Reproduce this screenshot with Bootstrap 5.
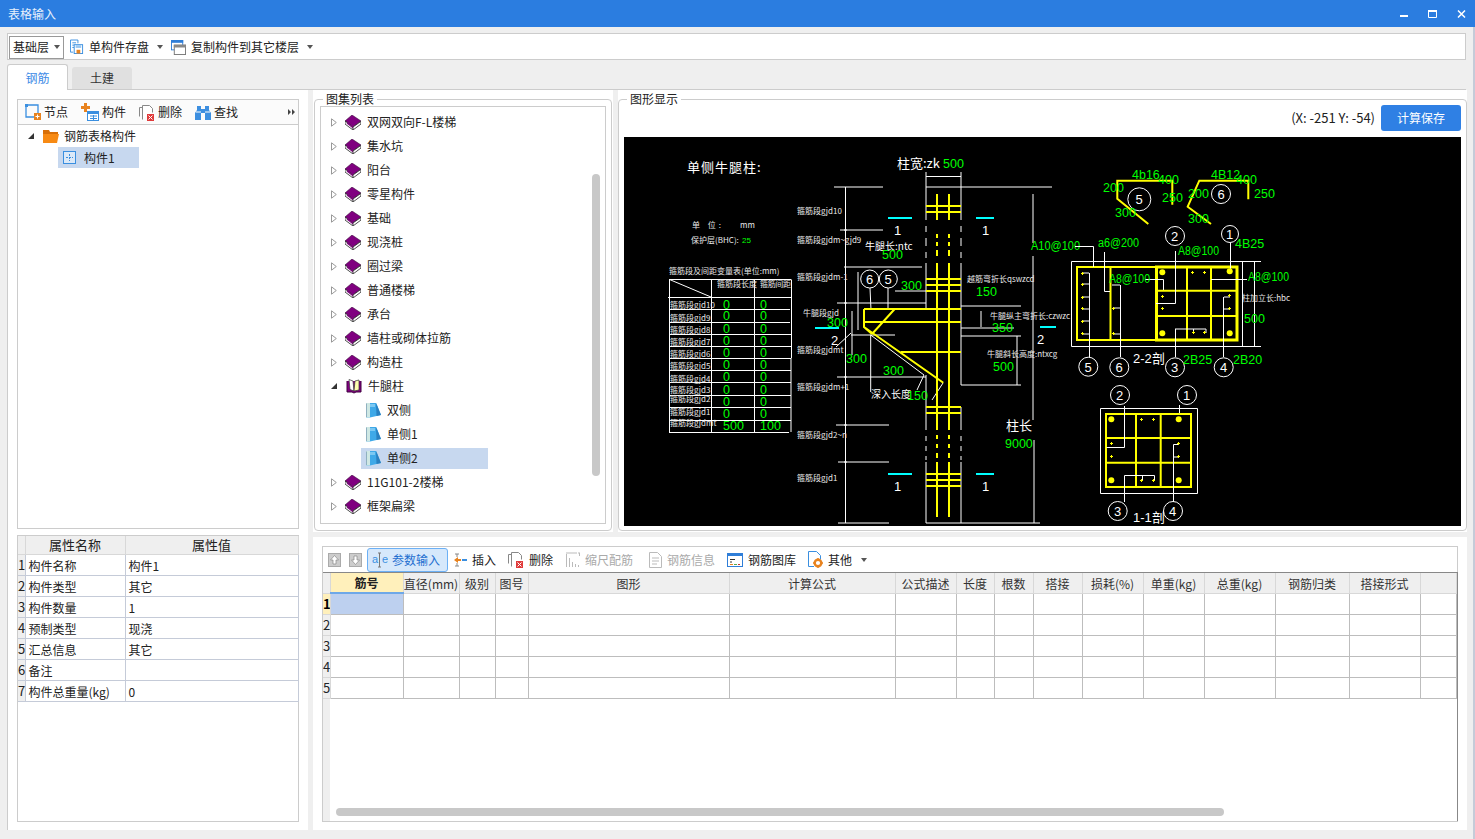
<!DOCTYPE html>
<html lang="zh-CN">
<head>
<meta charset="UTF-8">
<title>表格输入</title>
<link href="https://cdn.jsdelivr.net/npm/bootstrap@5.3.0/dist/css/bootstrap.min.css" rel="stylesheet">
<style>
html, body { height: 839px; overflow: hidden; }
body { font: 12px/16px "Noto Sans CJK SC", "Noto Sans", sans-serif; color: #222; background: #efefef; }
svg { display: block; flex: none; }
.title-bar { height: 27px; background: #2b7de0; color: #e8f1fc; padding-left: 8px; }
.win-ctl { gap: 20px; padding-right: 9px; }
.win-body { height: 812px; padding: 6px 7px 0; border-right: 2px solid #c5cbd8; }
.top-tools { height: 27px; background: #fff; border: 1px solid #ccc; padding: 1px 0 0 1px; }
.floor-select { width: 55px; height: 23px; border: 1px solid #999; padding-left: 3px; gap: 5px; color: #222; white-space: nowrap; }
.tri-down { width: 0; height: 0; border: 3px solid transparent; border-top: 4px solid #555; border-bottom: 0; flex: none; }
.tool-item { gap: 5px; white-space: nowrap; margin-left: 6px; }
.tool-item + .tool-item { margin-left: 8px; }
.tool-item .tri-down { margin-left: 3px; }
.page-tabs { height: 26px; margin-top: 4px; border-bottom: 1px solid #ccc; gap: 4px; }
.page-tabs .nav-link { font-size: 12px; padding: 0; text-align: center; width: 60px; color: #333; background: #e0e0e0; border: 0; border-radius: 3px 3px 0 0; height: 22px; line-height: 22px; margin-top: 3px; }
.page-tabs .nav-link.active { height: 26px; margin: 0; line-height: 26px; width: 61px; color: #3d8ae6; background: #fff; border: 1px solid #ccc; border-bottom: 0; }
.tab-panes { height: 740px; }
.pane-left { width: 301px; background: #fff; border-left: 1px solid #ccc; padding: 9px 9px 8px 9px; }
.tool-row { height: 26px; border: 1px solid #ccc; background: #fbfbfb; flex: none; }
.left-tool { gap: 3px; margin-left: 7px; margin-right: 6px; }
.more-arrows { margin-left: auto; margin-right: 3px; }
.tree-box { height: 404px; border: 1px solid #ccc; border-top: 0; flex: none; }
.sel-wrap { height: 21px; padding-left: 5px; gap: 0; }
.sel-wrap svg { margin-right: 6px; }
.left-root { padding-left: 10px; height: 21px; }
.left-root .tri-open { margin-right: 9px; }
.left-root svg + span { margin-left: 5px; }
.left-child { margin-left: 40px; margin-top: 1px; width: 81px; height: 21px; padding-left: 5px; gap: 7px; background: #c7d8ef; }
.tri-open { width: 0; height: 0; border-left: 6px solid transparent; border-bottom: 6px solid #333; flex: none; }
.prop-box { height: 287px; border: 1px solid #ccc; margin-top: 6px; flex: none; }
.prop-table { margin: 0; width: 280px; table-layout: fixed; border-color: #c5cbd8; }
.prop-table th, .prop-table td { padding: 1px 3px 0; height: 21px; line-height: 19px; border: 1px solid #c5cbd8; border-width: 0 1px 1px 0; color: #222; vertical-align: middle; }
.prop-table th { height: 18px; padding: 0; line-height: 17px; background: #efefef; font-size: 13px; font-weight: 400; text-align: center; border-color: #d8d8d8; }
.prop-table td.row-no, .grid-table td.row-no { background: #efefef; padding: 0; text-align: center; font-size: 13px; vertical-align: middle; }
.p-no { width: 7px; } .p-name { width: 100px; } .p-val { width: 173px; }
.gutter-col { width: 5px; flex: none; }
.pane-mid { width: 300px; height: 442px; background: #fff; padding: 9px 1px 1px; }
.pane-right { width: 849px; height: 442px; background: #fff; padding: 9px 0 1px; }
.group-box { position: relative; height: 100%; border: 1px solid #ccc; border-radius: 4px; padding: 6px 5px; }
.pane-right .group-box { padding-top: 5px; }
.group-title { position: absolute; top: -9px; left: 8px; background: #fff; padding: 0 3px; }
.atlas-box { height: 418px; border: 1px solid #ccc; overflow: hidden; position: relative; padding-top: 3px; }
.atlas-row { height: 24px; padding-left: 10px; white-space: nowrap; }
.tri-closed { margin-right: 8px; }
.atlas-row .tri-open { margin-right: 9px; margin-left: 0; }
.atlas-row > svg + span { margin-left: 6px; }
.atlas-child { padding-left: 40px; }
.atlas-child .sel-wrap { width: 127px; }
.atlas-child.is-sel .sel-wrap { background: #c7d8ef; }
.v-scroll { position: absolute; top: 67px; left: 271px; width: 8px; height: 302px; background: #c8c8c8; border-radius: 4px; }
.coord-row { height: 32px; padding-bottom: 6px; gap: 6px; font-size: 13px; }
.calc-btn { width: 80px; height: 26px; padding: 0; font-size: 12px; background: #2f80e4; border: 0; border-radius: 3px; color: #fff; }
.cad-view { background: #000; }
.cad-view .ln { fill: none; stroke: #fff; stroke-width: 1; }
.cad-view .yl { fill: none; stroke: #ff0; stroke-width: 2; }
.cad-view .yt { fill: none; stroke: #ff0; stroke-width: 3; }
.cad-view .yp { fill: none; stroke: #ff0; stroke-width: 1; }
.cad-view .cy { fill: none; stroke: #0ff; stroke-width: 2; }
.cad-view .gn { fill: #0f0; font: 12.5px "Liberation Sans", sans-serif; }
.cad-view .gn-s { fill: #0f0; font: 8px "Liberation Sans", sans-serif; }
.cad-view .wt { fill: #fff; font: 13px "Noto Sans CJK SC", sans-serif; }
.cad-view .wm { fill: #fff; font: 10px "Noto Sans CJK SC", sans-serif; }
.cad-view .wl { fill: #fff; font: 13px "Liberation Sans", sans-serif; }
.cad-view .sm { fill: #e8e8e8; font: 8px "Noto Sans CJK SC", sans-serif; }
.cad-view .bd { fill: #ff0; }
.pane-bottom { height: 293px; margin-top: 5px; background: #fff; padding: 9px 9px 8px; width: 1154px; }
.grid-box { height: 100%; border: 1px solid #ccc; border-right: 0; }
.grid-tools { height: 25px; padding-left: 5px; flex: none; border-right: 1px solid #ccc; }
.grid-tool { gap: 5px; white-space: nowrap; height: 24px; }
.tool-on { width: 81px; height: 24px; margin: 0 5px 0 5px; padding: 0 0 0 4px; gap: 4px; background: #d6e8fb; border: 1px solid #6cb0f5; border-radius: 3px; color: #1f6fd0; font-size: 12px; }
.ae-mark { font: 11px "Liberation Sans", sans-serif; fill: #3a8fe0; }
.tool-off { color: #aaa; }
.grid-area { position: relative; overflow: hidden; background: linear-gradient(90deg, #efefef 7px, #fff 7px); border-top: 1px solid #888; border-right: 1px solid #888; }
.grid-table { margin: 0; width: 1133px; table-layout: fixed; }
.grid-table th, .grid-table td { height: 21px; padding: 0; border: 1px solid #bdbdbd; border-width: 0 1px 1px 0; }
.grid-table th { height: 20px; background: #efefef; font-weight: 400; text-align: center; line-height: 19px; border-color: #d8d8d8; color: #333; white-space: nowrap; overflow: hidden; }
.grid-table th.hd-on { background: #fff0bb; font-weight: 700; border-bottom: 2px solid #6ea8e8; color: #222; }
.grid-table td.row-on { background: #fff0bb; font-weight: 700; color: #000; }
.grid-table td.cell-on { background: #bdd0ef; }
.grid-table td.row-no { border-color: #d8d8d8; overflow: hidden; }
.h-scroll { position: absolute; left: 13px; right: 233px; bottom: 5px; height: 8px; background: #c8c8c8; border-radius: 4px; }
.g0 { width: 7px; } .g1 { width: 73px; } .g2 { width: 56px; } .g3 { width: 36px; } .g4 { width: 33px; } .g5 { width: 201px; } .g6 { width: 166px; }
.g7 { width: 61px; } .g8 { width: 38px; } .g9 { width: 39px; } .g10 { width: 49px; } .g11 { width: 61px; } .g12 { width: 61px; } .g13 { width: 71px; } .g14 { width: 74px; } .g15 { width: 71px; } .g16 { width: 36px; }
</style>
</head>
<body>
<svg width="0" height="0" class="position-absolute">
  <symbol id="i-book" viewBox="0 0 16 15"><path d="M0 6 7 0l9 6-8 6z" fill="#800080" stroke="#3a0a3a" stroke-width=".6"/><path d="M0 6v3l8 6 8-6-.2-2.500L8 12z" fill="#fff" stroke="#222" stroke-width=".8"/><path d="M2 8l6 4.800" stroke="#800080" stroke-width="1.200"/><path d="M8 12.500v2" stroke="#222"/></symbol>
  <symbol id="i-open" viewBox="0 0 16 16"><path d="M1 3v11h5l2 1 2-1h5V3" fill="#800080" stroke="#400040"/><path d="M3 1.500l4 1.500 1 10-4-1.500z" fill="#fff" stroke="#333" stroke-width=".7"/><path d="M13 2 9 3 8 13l5-1z" fill="#ffffb0" stroke="#333" stroke-width=".7"/></symbol>
  <symbol id="i-note" viewBox="0 0 15 16"><path d="M0 1h10l1.500 3L15 13l-11 2.500H0z" fill="#3fa9e8"/><path d="M0 1h4v14.500H0z" fill="#cfe8e4"/><path d="M.5 1.500v13.500" stroke="#8fb0c0"/><path d="M10 1l5 12-4.500 1z" fill="#2a80c0"/><path d="M4 2h5v3H4z" fill="#7cc8f2"/></symbol>
  <symbol id="i-save" viewBox="0 0 15 16"><path d="M8.500 4V.5h-8v13h3" fill="none" stroke="#3a8fe0"/><path d="M2.500 3.500h4M2.500 6h2M2.500 8.500h2" stroke="#3a8fe0"/><rect x="4.500" y="5.500" width="9" height="9.500" fill="#fff" stroke="#3a8fe0"/><rect x="6" y="6" width="6" height="3" fill="#9cc8f0"/><rect x="7" y="11" width="4" height="4" fill="#e8831f"/></symbol>
  <symbol id="i-win" viewBox="0 0 16 16"><rect x=".5" y=".5" width="12" height="10" fill="#fff" stroke="#2f7ed8"/><rect width="13" height="3" fill="#2f7ed8"/><rect x="3.500" y="5.500" width="12" height="10" fill="#fff" stroke="#777"/><rect x="3" y="5" width="13" height="3" fill="#888"/></symbol>
  <symbol id="i-node" viewBox="0 0 16 16"><path d="M1 1h12v8M9 13H1V1" fill="none" stroke="#3a8fe0" stroke-width="1.300"/><rect width="3" height="3" fill="#3a8fe0"/><rect x="9" y="9" width="7" height="7" fill="#e8831f"/><path d="M12.500 10.500v4M10.500 12.500h4" stroke="#fff"/></symbol>
  <symbol id="i-comp" viewBox="0 0 18 18"><path d="M3 0h3v3h3v3H6v3H3V6H0V3h3z" fill="#e8831f"/><rect x="6.500" y="8.500" width="11" height="9" fill="#fff" stroke="#3a8fe0"/><rect x="6" y="8" width="12" height="3" fill="#3a8fe0"/><path d="M9 13h7M9 15.500h7M12.500 12v5" stroke="#3a8fe0"/></symbol>
  <symbol id="i-del" viewBox="0 0 16 17"><path d="M3.500 15.500V1.500h7l3 3v4" fill="#fff" stroke="#888"/><path d="M.5 12.500V3.500H3" fill="none" stroke="#888"/><rect x="8" y="10" width="7" height="7" fill="#e03a3a"/><path d="M9.500 11.500l4 4m0-4-4 4" stroke="#fff"/></symbol>
  <symbol id="i-find" viewBox="0 0 16 15"><path d="M2 1h4v3h4V1h4v4l2 3v7H10V8H6v7H0V8l2-3z" fill="#3d8fe0"/><path d="M1 7h5M10 7h5" stroke="#fff"/></symbol>
  <symbol id="i-folder" viewBox="0 0 16 14"><path d="M0 1h6l1 2h8v3H0z" fill="#d86f08"/><path d="M0 5h16l-2 9H0z" fill="#f78a14"/></symbol>
  <symbol id="i-item" viewBox="0 0 14 14"><rect x=".5" y=".5" width="12" height="12" fill="#dbe9f8" stroke="#3a8fe0"/><path d="M6.500 3v7M3 6.500h7" stroke="#3a8fe0" stroke-dasharray="2 1"/></symbol>
  <symbol id="i-up" viewBox="0 0 13 14"><rect x=".5" y=".5" width="12" height="13" fill="#ccc" stroke="#aaa"/><path d="M6.500 2.500 2.500 7H5v4h3V7h2.500z" fill="#fff" stroke="#888" stroke-width=".7"/></symbol>
  <symbol id="i-down" viewBox="0 0 13 14"><rect x=".5" y=".5" width="12" height="13" fill="#ccc" stroke="#aaa"/><path d="M6.500 11.500 2.500 7H5V3h3v4h2.500z" fill="#fff" stroke="#888" stroke-width=".7"/></symbol>
  <symbol id="i-ins" viewBox="0 0 14 16"><path d="M2 2h4M2 14h4M4 2v3M4 11v3" stroke="#888"/><path d="M1 8l4-3v2h3v2H5v2z" fill="#e8831f"/><rect x="9" y="7" width="5" height="2" fill="#3a8fe0"/></symbol>
  <symbol id="i-scale" viewBox="0 0 15 15"><path d="M1.500 15V2M4.500 15V6M7.500 15V10M10.500 15v-3M13.500 15v-2" stroke="#bbb"/><path d="M1 1h11M13 1h2M14.500 1v3" stroke="#bbb"/></symbol>
  <symbol id="i-info" viewBox="0 0 13 16"><path d="M.5.5h8l4 4v11H.5z" fill="#fff" stroke="#bbb"/><path d="M3 6h7M3 9h7M3 12h5" stroke="#bbb"/></symbol>
  <symbol id="i-lib" viewBox="0 0 16 14"><rect x=".5" y=".5" width="15" height="13" fill="#fff" stroke="#2f7ed8"/><rect width="16" height="3" fill="#2f7ed8"/><path d="M3 6.500h5M3 9h2" stroke="#333"/><path d="M3 11.500h3" stroke="#e8831f"/><path d="M7 11.500h3" stroke="#5a5"/><path d="M11 11.500h2" stroke="#c33"/></symbol>
  <symbol id="i-other" viewBox="0 0 15 17"><path d="M6 15.500H.5V.5h8l4 4v4" fill="#fff" stroke="#3a8fe0"/><circle cx="10" cy="12" r="3.300" fill="none" stroke="#e8831f" stroke-width="2.400"/><path d="M10 7v1.500M10 15.500V17M5 12h1.500M13.500 12H15" stroke="#e8831f" stroke-width="1.500"/></symbol>
  <symbol id="i-tri" viewBox="0 0 6 9"><path d="M.5.8v7.400L5.300 4.500z" fill="#fff" stroke="#999"/></symbol>
</svg>

<header class="title-bar d-flex align-items-center justify-content-between">
  <span>表格输入</span>
  <div class="win-ctl d-flex align-items-center">
    <svg width="8" height="8" viewBox="0 0 8 8"><rect y="5" width="8" height="2" fill="#fff"/></svg>
    <svg width="9" height="8" viewBox="0 0 9 8"><path d="M.5 1.500h8v6h-8z" fill="none" stroke="#fff"/><rect width="9" height="2" fill="#fff"/></svg>
    <svg width="9" height="8" viewBox="0 0 9 8"><path d="M1 .5l7 7m0-7-7 7" stroke="#fff" stroke-width="1.500"/></svg>
  </div>
</header>

<div class="win-body">
  <div class="top-tools d-flex align-items-center">
    <div class="floor-select d-flex align-items-center"><span>基础层</span><span class="tri-down"></span></div>
    <div class="tool-item d-flex align-items-center"><svg width="14" height="16"><use href="#i-save"/></svg><span>单构件存盘</span><span class="tri-down"></span></div>
    <div class="tool-item d-flex align-items-center"><svg width="15" height="15"><use href="#i-win"/></svg><span>复制构件到其它楼层</span><span class="tri-down"></span></div>
  </div>

  <ul class="nav page-tabs">
    <li class="nav-item"><a class="nav-link active" href="#">钢筋</a></li>
    <li class="nav-item"><a class="nav-link" href="#">土建</a></li>
  </ul>

  <div class="tab-panes d-flex">
    <section class="pane-left d-flex flex-column">
      <div class="tool-row d-flex align-items-center">
        <div class="left-tool d-flex align-items-center"><svg width="16" height="16"><use href="#i-node"/></svg><span>节点</span></div>
        <div class="left-tool d-flex align-items-center"><svg width="18" height="18"><use href="#i-comp"/></svg><span>构件</span></div>
        <div class="left-tool d-flex align-items-center"><svg width="16" height="17"><use href="#i-del"/></svg><span>删除</span></div>
        <div class="left-tool d-flex align-items-center"><svg width="16" height="15"><use href="#i-find"/></svg><span>查找</span></div>
        <svg class="more-arrows" width="7" height="6" viewBox="0 0 7 6"><path d="M0 0l3 3-3 3zM4 0l3 3-3 3z" fill="#444"/></svg>
      </div>
      <div class="tree-box">
        <div class="left-root d-flex align-items-center"><span class="tri-open"></span><svg width="16" height="14"><use href="#i-folder"/></svg><span>钢筋表格构件</span></div>
        <div class="left-child d-flex align-items-center"><svg width="14" height="14"><use href="#i-item"/></svg><span>构件1</span></div>
      </div>
      <div class="prop-box">
        <table class="table prop-table">
          <colgroup><col class="p-no"><col class="p-name"><col class="p-val"></colgroup>
          <thead><tr><th></th><th>属性名称</th><th>属性值</th></tr></thead>
          <tbody>
            <tr><td class="row-no">1</td><td>构件名称</td><td>构件1</td></tr>
            <tr><td class="row-no">2</td><td>构件类型</td><td>其它</td></tr>
            <tr><td class="row-no">3</td><td>构件数量</td><td>1</td></tr>
            <tr><td class="row-no">4</td><td>预制类型</td><td>现浇</td></tr>
            <tr><td class="row-no">5</td><td>汇总信息</td><td>其它</td></tr>
            <tr><td class="row-no">6</td><td>备注</td><td></td></tr>
            <tr><td class="row-no">7</td><td>构件总重量(kg)</td><td>0</td></tr>
          </tbody>
        </table>
      </div>
    </section>
    <div class="gutter-col"></div>

    <div class="d-flex flex-column">
      <div class="d-flex">
        <section class="pane-mid">
          <div class="group-box">
            <span class="group-title">图集列表</span>
            <div class="atlas-box">
              <div class="atlas-row d-flex align-items-center"><svg class="tri-closed" width="6" height="9"><use href="#i-tri"/></svg><svg width="16" height="15"><use href="#i-book"/></svg><span>双网双向F-L楼梯</span></div>
              <div class="atlas-row d-flex align-items-center"><svg class="tri-closed" width="6" height="9"><use href="#i-tri"/></svg><svg width="16" height="15"><use href="#i-book"/></svg><span>集水坑</span></div>
              <div class="atlas-row d-flex align-items-center"><svg class="tri-closed" width="6" height="9"><use href="#i-tri"/></svg><svg width="16" height="15"><use href="#i-book"/></svg><span>阳台</span></div>
              <div class="atlas-row d-flex align-items-center"><svg class="tri-closed" width="6" height="9"><use href="#i-tri"/></svg><svg width="16" height="15"><use href="#i-book"/></svg><span>零星构件</span></div>
              <div class="atlas-row d-flex align-items-center"><svg class="tri-closed" width="6" height="9"><use href="#i-tri"/></svg><svg width="16" height="15"><use href="#i-book"/></svg><span>基础</span></div>
              <div class="atlas-row d-flex align-items-center"><svg class="tri-closed" width="6" height="9"><use href="#i-tri"/></svg><svg width="16" height="15"><use href="#i-book"/></svg><span>现浇桩</span></div>
              <div class="atlas-row d-flex align-items-center"><svg class="tri-closed" width="6" height="9"><use href="#i-tri"/></svg><svg width="16" height="15"><use href="#i-book"/></svg><span>圈过梁</span></div>
              <div class="atlas-row d-flex align-items-center"><svg class="tri-closed" width="6" height="9"><use href="#i-tri"/></svg><svg width="16" height="15"><use href="#i-book"/></svg><span>普通楼梯</span></div>
              <div class="atlas-row d-flex align-items-center"><svg class="tri-closed" width="6" height="9"><use href="#i-tri"/></svg><svg width="16" height="15"><use href="#i-book"/></svg><span>承台</span></div>
              <div class="atlas-row d-flex align-items-center"><svg class="tri-closed" width="6" height="9"><use href="#i-tri"/></svg><svg width="16" height="15"><use href="#i-book"/></svg><span>墙柱或砌体拉筋</span></div>
              <div class="atlas-row d-flex align-items-center"><svg class="tri-closed" width="6" height="9"><use href="#i-tri"/></svg><svg width="16" height="15"><use href="#i-book"/></svg><span>构造柱</span></div>
              <div class="atlas-row d-flex align-items-center"><span class="tri-open"></span><svg width="16" height="16"><use href="#i-open"/></svg><span>牛腿柱</span></div>
              <div class="atlas-row atlas-child d-flex align-items-center"><div class="sel-wrap d-flex align-items-center"><svg width="15" height="16"><use href="#i-note"/></svg><span>双侧</span></div></div>
              <div class="atlas-row atlas-child d-flex align-items-center"><div class="sel-wrap d-flex align-items-center"><svg width="15" height="16"><use href="#i-note"/></svg><span>单侧1</span></div></div>
              <div class="atlas-row atlas-child is-sel d-flex align-items-center"><div class="sel-wrap d-flex align-items-center"><svg width="15" height="16"><use href="#i-note"/></svg><span>单侧2</span></div></div>
              <div class="atlas-row d-flex align-items-center"><svg class="tri-closed" width="6" height="9"><use href="#i-tri"/></svg><svg width="16" height="15"><use href="#i-book"/></svg><span>11G101-2楼梯</span></div>
              <div class="atlas-row d-flex align-items-center"><svg class="tri-closed" width="6" height="9"><use href="#i-tri"/></svg><svg width="16" height="15"><use href="#i-book"/></svg><span>框架扁梁</span></div>
              <div class="atlas-row d-flex align-items-center"><svg class="tri-closed" width="6" height="9"><use href="#i-tri"/></svg><svg width="16" height="15"><use href="#i-book"/></svg></div>
              <div class="v-scroll"></div>
            </div>
          </div>
        </section>
        <div class="gutter-col"></div>
        <section class="pane-right">
          <div class="group-box">
            <span class="group-title">图形显示</span>
            <div class="coord-row d-flex align-items-center justify-content-end"><span>(X: -251 Y: -54)</span><button class="btn calc-btn" type="button">计算保存</button></div>
            <!-- 钢筋示意图，坐标按页面像素 -->
            <svg class="cad-view" width="837" height="389" viewBox="624 137 837 389">
              <!-- 立面白线 -->
              <path class="ln" d="M926 172V187M961 172V187M926 176.500H961M926 187H1052M926 187V220M926 226V232M926 238V246M926 252V258M926 263V309M961 187V220M961 226V232M961 238V246M961 252V258M961 263V385M926 375V430M926 436V441M926 446V451M926 456V460M926 462V523M961 407V430M961 436V441M961 446V451M961 456V460M961 462V523M926 523H1040"/>
              <path class="ln" d="M845.500 187V523M834 187H883M840 230H883M847 267H922M837 303H926M837 377H926M836 425H889M838 462H889M838 523H889M851 335H895M852 311V355M858 272V330M844 230h3M844 267h3M844 303h3M844 377h3M844 425h3M844 462h3"/>
              <path class="ln" d="M961 306H1021M961 328H1014M981 311V327M961 336H1021M961 385H1021M1017 336V385M1033 194V243M1033 256V420M1034 440V523M870 288 871 310M888 288V310M895 291H926M870.700 335 924 375M870.700 335V392M917 390 924 375M932 400 943 383M851 333 836 347"/>
              <circle class="ln" cx="869.700" cy="279" r="9"/><circle class="ln" cx="888.300" cy="279" r="9"/>
              <text class="wl" x="866" y="284">6</text><text class="wl" x="884.500" y="284">5</text>
              <!-- 立面钢筋 -->
              <path class="yl" d="M937 194V220M949 194V220M937 234V238M949 234V238M937 242V246M949 242V246M937 250V256M949 250V256M937 263V430M949 263V430M937 435V439M949 435V439M937 444V448M949 444V448M937 453V458M949 453V458M937 462V517M949 462V517"/>
              <path class="yl" d="M926 206H961M926 212H961M926 279H961M926 285H961M926 291H961M864 309H961M864 322H961M864 309V327L872 334M894.700 309 872 334M864 327 943.300 382.700M900.700 352H961M926 407H961M926 413H961M926 474H961M926 480H961M926 486H961"/>
              <path class="cy" d="M888 218H912M976 218H994M888 474H912M976 474H994M815 328H839M1040 327H1056"/>
              <!-- 变量表 -->
              <path class="ln" d="M669.500 279.500V432M711.500 279.500V432M754.500 279.500V432M791.500 279.500V358M791 358V432M669 279.500H791M669.500 279.500 711 297M668 297.500H791M669 309.500H790M669 322.500H790M669 334.500H791M669 346.500H791M669 358.500H791M669 370.500H791M669 382.500H791M669 395.500H791M669 407.500H791M669 420.500H791M669 432.500H789"/>
              <text class="sm" x="669" y="274">箍筋段及间距变量表(单位:mm)</text>
              <text class="sm" x="717" y="287">箍筋段长度</text><text class="sm" x="760" y="287" textLength="31">箍筋间距</text>
              <g>
                <text class="sm" x="670" y="308">箍筋段gjd10</text><text class="sm" x="670" y="321">箍筋段gjd9</text><text class="sm" x="670" y="333">箍筋段gjd8</text><text class="sm" x="670" y="345">箍筋段gjd7</text><text class="sm" x="670" y="357">箍筋段gjd6</text><text class="sm" x="670" y="369">箍筋段gjd5</text><text class="sm" x="670" y="382">箍筋段gjd4</text><text class="sm" x="670" y="393">箍筋段gjd3</text><text class="sm" x="670" y="402">箍筋段gjd2</text><text class="sm" x="670" y="415">箍筋段gjd1</text><text class="sm" x="670" y="426">箍筋段gjdmt</text>
              </g>
              <g>
                <text class="gn" x="723" y="309">0</text><text class="gn" x="760" y="309">0</text><text class="gn" x="723" y="320">0</text><text class="gn" x="760" y="320">0</text><text class="gn" x="723" y="333">0</text><text class="gn" x="760" y="333">0</text><text class="gn" x="723" y="345">0</text><text class="gn" x="760" y="345">0</text><text class="gn" x="723" y="357">0</text><text class="gn" x="760" y="357">0</text><text class="gn" x="723" y="369">0</text><text class="gn" x="760" y="369">0</text><text class="gn" x="723" y="381">0</text><text class="gn" x="760" y="381">0</text><text class="gn" x="723" y="394">0</text><text class="gn" x="760" y="394">0</text><text class="gn" x="723" y="406">0</text><text class="gn" x="760" y="406">0</text><text class="gn" x="723" y="418">0</text><text class="gn" x="760" y="418">0</text><text class="gn" x="723" y="430">500</text><text class="gn" x="760" y="430">100</text>
              </g>
              <!-- 文字 -->
              <text class="wt" x="687" y="172" letter-spacing="1">单侧牛腿柱:</text>
              <text class="wt" x="897" y="168">柱宽:zk</text><text class="gn" x="943" y="168">500</text>
              <text class="sm" x="692" y="228" letter-spacing="3">单 位:</text><text class="sm" x="740" y="228">mm</text>
              <text class="sm" x="691" y="243">保护层(BHC):</text><text class="gn-s" x="742" y="243">25</text>
              <text class="sm" x="797" y="214">箍筋段gjd10</text><text class="sm" x="797" y="243">箍筋段gjdm~gjd9</text><text class="sm" x="797" y="280">箍筋段gjdm-1</text><text class="sm" x="803" y="316">牛腿段gjd</text><text class="sm" x="797" y="353">箍筋段gjdmt</text><text class="sm" x="797" y="390">箍筋段gjdm+1</text><text class="sm" x="797" y="438">箍筋段gjd2~n</text><text class="sm" x="797" y="481">箍筋段gjd1</text>
              <text class="wm" x="865" y="250">牛腿长:ntc</text>
              <text class="sm" x="967" y="282">越筋弯折长qswzcd</text><text class="sm" x="990" y="319">牛腿纵主弯折长:czwzc</text><text class="sm" x="987" y="357">牛腿斜长高度:ntxcg</text>
              <text class="wm" x="871" y="398">深入长度</text><text class="wt" x="1006" y="430">柱长</text>
              <text class="wl" x="831" y="345">2</text><text class="wl" x="1037" y="344">2</text>
              <text class="wl" x="894" y="235">1</text><text class="wl" x="982" y="235">1</text><text class="wl" x="894" y="491">1</text><text class="wl" x="982" y="491">1</text>
              <text class="gn" x="882" y="259">500</text><text class="gn" x="901" y="290">300</text><text class="gn" x="827" y="327">300</text><text class="gn" x="976" y="296">150</text><text class="gn" x="992" y="332">350</text><text class="gn" x="846" y="363">300</text><text class="gn" x="883" y="375">300</text><text class="gn" x="907" y="400">150</text><text class="gn" x="993" y="371">500</text><text class="gn" x="1005" y="448">9000</text>
              <text class="gn" x="1031" y="250" textLength="49" lengthAdjust="spacingAndGlyphs">A10@100</text>
              <!-- 钢筋大样 -->
              <path class="yl" d="M1172.300 204.700V180.700H1117.300V198.700L1148.300 224M1248.300 199.300V180.700H1199.300L1187.700 206.700 1211 224"/>
              <circle class="ln" cx="1139.300" cy="199.300" r="11.500"/><circle class="ln" cx="1221" cy="194" r="9.500"/>
              <text class="wl" x="1135.500" y="204">5</text><text class="wl" x="1217.500" y="199">6</text>
              <text class="gn" x="1132" y="179">4b16</text><text class="gn" x="1158" y="184">400</text><text class="gn" x="1103" y="192">200</text><text class="gn" x="1162" y="202">250</text><text class="gn" x="1115" y="217">300</text>
              <text class="gn" x="1211" y="179">4B12</text><text class="gn" x="1236" y="184">400</text><text class="gn" x="1188" y="198">200</text><text class="gn" x="1254" y="198">250</text><text class="gn" x="1188" y="223">300</text>
              <!-- 2-2 剖面 -->
              <path class="ln" d="M1071.500 261.500H1261M1071.500 346.500H1261M1071.500 261.500V346.500M1242.500 261.500V346.500M1254.500 262V346"/>
              <path class="yl" d="M1077 267H1237V340H1077zM1110.500 267V340"/>
              <path class="yt" d="M1156.500 267H1237V340H1156.500z"/>
              <path class="yl" d="M1187 267V340M1211 267V340M1156 290.700H1237M1156 316H1237"/>
              <path class="ln" d="M1089.500 273V357M1083 273h6M1083 284h6M1083 297h6M1083 309h6M1083 321h6M1083 334h6M1120.500 285V357M1112 285h8M1113 308h7M1113 334h7M1175.500 329V357M1175 329H1206V333M1193.500 329V333M1223.500 297V357M1224 297h6M1224 309h6M1230.500 243V270M1175.500 251V303.500H1156M1145 279.500H1163.500V290M1104.500 252V291.500H1110M1075 246.500H1093.500V267M1211 279.500H1247"/>
              <circle class="bd" cx="1162.300" cy="272.300" r="3"/><circle class="bd" cx="1229.700" cy="271.300" r="3"/><circle class="bd" cx="1162.300" cy="333.300" r="3"/><circle class="bd" cx="1229.700" cy="333.300" r="3"/>
              <path class="yp" d="M1191 272.500h3m-1.500-1.500v3M1203 272.500h3m-1.500-1.500v3M1161 296.500h3m-1.500-1.500v3M1161 308.500h3m-1.500-1.500v3M1228 295.500h3m-1.500-1.500v3M1228 308.500h3m-1.500-1.500v3M1192 332.500h3m-1.500-1.500v3M1203 332.500h3m-1.500-1.500v3M1081 273.500h3m-1.500-1.500v3M1081 284.500h3m-1.500-1.500v3M1081 297.500h3m-1.500-1.500v3M1081 308.500h3m-1.500-1.500v3M1081 321.500h3m-1.500-1.500v3M1081 333.500h3m-1.500-1.500v3M1112 308.500h3m-1.500-1.500v3M1112 333.500h3m-1.500-1.500v3"/>
              <circle class="ln" cx="1175" cy="236" r="9.500"/><circle class="ln" cx="1230" cy="234" r="8.500"/><circle class="ln" cx="1088.300" cy="366.700" r="9.500"/><circle class="ln" cx="1119.300" cy="367.300" r="9.500"/><circle class="ln" cx="1175" cy="367.300" r="9.500"/><circle class="ln" cx="1223.700" cy="367.300" r="9.500"/>
              <text class="wl" x="1171" y="241">2</text><text class="wl" x="1226" y="239">1</text><text class="wl" x="1084.500" y="371.500">5</text><text class="wl" x="1115.500" y="372">6</text><text class="wl" x="1171" y="372">3</text><text class="wl" x="1220" y="372">4</text>
              <text class="gn" x="1098" y="247" textLength="41" lengthAdjust="spacingAndGlyphs">a6@200</text><text class="gn" x="1178" y="255" textLength="41" lengthAdjust="spacingAndGlyphs">A8@100</text><text class="gn" x="1235" y="248">4B25</text><text class="gn" x="1109" y="283" textLength="41" lengthAdjust="spacingAndGlyphs">A8@100</text><text class="gn" x="1248" y="281" textLength="41" lengthAdjust="spacingAndGlyphs">A8@100</text><text class="gn" x="1244" y="323">500</text><text class="gn" x="1183" y="364">2B25</text><text class="gn" x="1233" y="364">2B20</text>
              <text class="sm" x="1242" y="301">柱加立长:hbc</text><text class="wl" x="1133" y="363">2-2</text><text class="wt" x="1152" y="363">剖</text>
              <!-- 1-1 剖面 -->
              <path class="ln" d="M1100.500 408.500H1197.500V493.500H1100.500z"/>
              <path class="yl" d="M1106 414H1191V487H1106zM1136 414V487M1160.700 414V487M1106 438H1191M1106 462.700H1191"/>
              <path class="ln" d="M1124.500 406V447.500H1106.500M1179.500 405V413M1124.500 502V475.500H1154.500V480M1142.500 475.500V480M1173.500 502V444.500H1179M1173.500 457H1179"/>
              <circle class="bd" cx="1111.300" cy="419.300" r="3"/><circle class="bd" cx="1178.700" cy="419.300" r="3"/><circle class="bd" cx="1111.300" cy="480.300" r="3"/><circle class="bd" cx="1178.700" cy="480.300" r="3"/>
              <path class="yp" d="M1140 419.500h3m-1.500-1.500v3M1152 419.500h3m-1.500-1.500v3M1110 443.500h3m-1.500-1.500v3M1110 456.500h3m-1.500-1.500v3M1177 443.500h3m-1.500-1.500v3M1177 456.500h3m-1.500-1.500v3M1140 480.500h3m-1.500-1.500v3M1152 480.500h3m-1.500-1.500v3"/>
              <circle class="ln" cx="1120" cy="395" r="9.500"/><circle class="ln" cx="1187" cy="395" r="9.500"/><circle class="ln" cx="1117.700" cy="511" r="9.500"/><circle class="ln" cx="1173" cy="511" r="9.500"/>
              <text class="wl" x="1116" y="400">2</text><text class="wl" x="1183" y="400">1</text><text class="wl" x="1114" y="516">3</text><text class="wl" x="1169" y="516">4</text>
              <text class="wl" x="1133" y="522">1-1</text><text class="wt" x="1152" y="522">剖</text>
            </svg>
          </div>
        </section>
      </div>

      <section class="pane-bottom">
        <div class="grid-box d-flex flex-column">
          <div class="grid-tools d-flex align-items-center">
            <svg class="me-2" width="13" height="14"><use href="#i-up"/></svg>
            <svg width="13" height="14"><use href="#i-down"/></svg>
            <button class="btn tool-on d-flex align-items-center" type="button"><svg width="16" height="16" viewBox="0 0 16 16"><text class="ae-mark" x="0" y="11">a</text><text class="ae-mark" x="10" y="11">e</text><path d="M6 1h3M7.500 1v14M6 15h3" stroke="#777" fill="none"/></svg><span>参数输入</span></button>
            <div class="grid-tool d-flex align-items-center me-2"><svg width="14" height="16"><use href="#i-ins"/></svg><span>插入</span></div>
            <div class="grid-tool d-flex align-items-center ms-1 me-2"><svg width="16" height="17"><use href="#i-del"/></svg><span>删除</span></div>
            <div class="grid-tool tool-off d-flex align-items-center ms-1 me-2"><svg width="15" height="15"><use href="#i-scale"/></svg><span>缩尺配筋</span></div>
            <div class="grid-tool tool-off d-flex align-items-center ms-2 me-2"><svg width="13" height="16"><use href="#i-info"/></svg><span>钢筋信息</span></div>
            <div class="grid-tool d-flex align-items-center ms-1 me-2"><svg width="16" height="14"><use href="#i-lib"/></svg><span>钢筋图库</span></div>
            <div class="grid-tool d-flex align-items-center ms-1"><svg width="15" height="17"><use href="#i-other"/></svg><span>其他</span><span class="tri-down ms-1"></span></div>
          </div>
          <div class="grid-area flex-grow-1">
            <table class="table grid-table">
              <colgroup><col class="g0"><col class="g1"><col class="g2"><col class="g3"><col class="g4"><col class="g5"><col class="g6"><col class="g7"><col class="g8"><col class="g9"><col class="g10"><col class="g11"><col class="g12"><col class="g13"><col class="g14"><col class="g15"><col class="g16"></colgroup>
              <thead><tr><th></th><th class="hd-on">筋号</th><th>直径(mm)</th><th>级别</th><th>图号</th><th>图形</th><th>计算公式</th><th>公式描述</th><th>长度</th><th>根数</th><th>搭接</th><th>损耗(%)</th><th>单重(kg)</th><th>总重(kg)</th><th>钢筋归类</th><th>搭接形式</th><th></th></tr></thead>
              <tbody id="gridRows"></tbody>
            </table>
            <div class="h-scroll"></div>
          </div>
        </div>
      </section>
    </div>
  </div>
</div>

<script src="https://cdn.jsdelivr.net/npm/bootstrap@5.3.0/dist/js/bootstrap.bundle.min.js"></script>
<script>
  // 钢筋表格空行
  const gridRows = document.getElementById('gridRows');
  for (let i = 1; i <= 5; i++) {
    let cells = '';
    for (let c = 0; c < 16; c++) {
      cells += (i === 1 && c === 0) ? '<td class="cell-on"></td>' : '<td></td>';
    }
    gridRows.insertAdjacentHTML('beforeend', `<tr><td class="row-no ${i === 1 ? 'row-on' : ''}">${i}</td>${cells}</tr>`);
  }
</script>
</body>
</html>
